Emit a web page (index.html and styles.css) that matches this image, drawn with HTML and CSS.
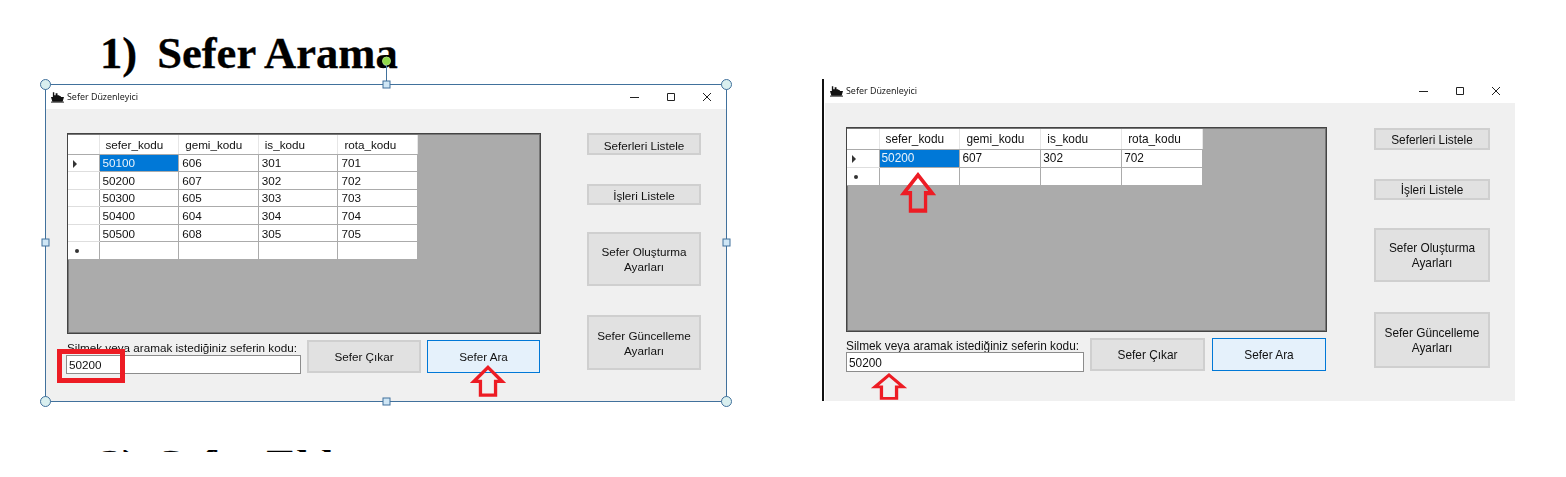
FILE: index.html
```html
<!DOCTYPE html>
<html lang="tr">
<head>
<meta charset="utf-8">
<title>Sefer Arama</title>
<link rel="stylesheet" href="styles.css">
</head>
<body>
<h1 class="heading heading-one"><span>1)</span><span>Sefer Arama</span></h1>
<h1 class="heading heading-two"><span>2)</span><span>Sefer Ekle</span></h1>

<section class="win win-a">
  <header class="titlebar">
    <svg class="ship" viewBox="0 0 14 12"><path d="M2 1h1.500v3H5V2h2v2h2v1h1.500v1H14l-1.500 5h-11L0 6h2z" fill="#111"/><path d="M0 11h14v1H0z" fill="#111"/></svg>
    <span class="title">Sefer Düzenleyici</span>
    <span class="controls">
      <svg viewBox="0 0 10 10"><path d="M0 5.500h9" stroke="#222" fill="none"/></svg>
      <svg viewBox="0 0 10 10"><path d="M1.500 1.500h7v7h-7z" stroke="#222" fill="none"/></svg>
      <svg viewBox="0 0 10 10"><path d="M1 1l8 8M9 1l-8 8" stroke="#222" fill="none"/></svg>
    </span>
  </header>
  <div class="body">
    <div class="main">
      <div class="grid">
        <table>
          <thead><tr><th class="rh"></th><th>sefer_kodu</th><th>gemi_kodu</th><th>is_kodu</th><th>rota_kodu</th></tr></thead>
          <tbody>
            <tr><td class="rh"><i class="tri"></i></td><td class="sel">50100</td><td>606</td><td>301</td><td>701</td></tr>
            <tr><td class="rh"></td><td>50200</td><td>607</td><td>302</td><td>702</td></tr>
            <tr><td class="rh"></td><td>50300</td><td>605</td><td>303</td><td>703</td></tr>
            <tr><td class="rh"></td><td>50400</td><td>604</td><td>304</td><td>704</td></tr>
            <tr><td class="rh"></td><td>50500</td><td>608</td><td>305</td><td>705</td></tr>
            <tr><td class="rh"><i class="dot"></i></td><td></td><td></td><td></td><td></td></tr>
          </tbody>
        </table>
      </div>
      <div class="search">
        <div class="field">
          <label class="label">Silmek veya aramak istediğiniz seferin kodu:</label>
          <div class="input">50200</div>
        </div>
        <button class="btn btn-wide">Sefer Çıkar</button>
        <button class="btn btn-wide btn-active">Sefer Ara</button>
      </div>
    </div>
    <div class="side">
      <button class="btn s1">Seferleri Listele</button>
      <button class="btn s2">İşleri Listele</button>
      <button class="btn s3">Sefer Oluşturma<br>Ayarları</button>
      <button class="btn s4">Sefer Güncelleme<br>Ayarları</button>
    </div>
  </div>
</section>

<section class="win win-b">
  <header class="titlebar">
    <svg class="ship" viewBox="0 0 14 12"><path d="M2 1h1.500v3H5V2h2v2h2v1h1.500v1H14l-1.500 5h-11L0 6h2z" fill="#111"/><path d="M0 11h14v1H0z" fill="#111"/></svg>
    <span class="title">Sefer Düzenleyici</span>
    <span class="controls">
      <svg viewBox="0 0 10 10"><path d="M0 5.500h9" stroke="#222" fill="none"/></svg>
      <svg viewBox="0 0 10 10"><path d="M1.500 1.500h7v7h-7z" stroke="#222" fill="none"/></svg>
      <svg viewBox="0 0 10 10"><path d="M1 1l8 8M9 1l-8 8" stroke="#222" fill="none"/></svg>
    </span>
  </header>
  <div class="body">
    <div class="main">
      <div class="grid">
        <table>
          <thead><tr><th class="rh"></th><th>sefer_kodu</th><th>gemi_kodu</th><th>is_kodu</th><th>rota_kodu</th></tr></thead>
          <tbody>
            <tr><td class="rh"><i class="tri"></i></td><td class="sel">50200</td><td>607</td><td>302</td><td>702</td></tr>
            <tr><td class="rh"><i class="dot"></i></td><td></td><td></td><td></td><td></td></tr>
          </tbody>
        </table>
      </div>
      <div class="search">
        <div class="field">
          <label class="label">Silmek veya aramak istediğiniz seferin kodu:</label>
          <div class="input">50200</div>
        </div>
        <button class="btn btn-wide">Sefer Çıkar</button>
        <button class="btn btn-wide btn-active">Sefer Ara</button>
      </div>
    </div>
    <div class="side">
      <button class="btn s1">Seferleri Listele</button>
      <button class="btn s2">İşleri Listele</button>
      <button class="btn s3">Sefer Oluşturma<br>Ayarları</button>
      <button class="btn s4">Sefer Güncelleme<br>Ayarları</button>
    </div>
  </div>
</section>

<!-- selection frame around the first screenshot -->
<svg class="selection" viewBox="0 0 710 350">
  <path class="sel-line" d="M20.500 30.500h681v317h-681zM361.500 30.500V8"/>
  <circle class="sel-round" cx="20.500" cy="30.500" r="5"/>
  <circle class="sel-round" cx="701.500" cy="30.500" r="5"/>
  <circle class="sel-round" cx="20.500" cy="347.500" r="5"/>
  <circle class="sel-round" cx="701.500" cy="347.500" r="5"/>
  <rect class="sel-square" x="358" y="27" width="7" height="7"/>
  <rect class="sel-square" x="358" y="344" width="7" height="7"/>
  <rect class="sel-square" x="17" y="185" width="7" height="7"/>
  <rect class="sel-square" x="698" y="185" width="7" height="7"/>
  <circle class="sel-rot" cx="361.500" cy="7" r="4"/>
</svg>

<div class="redbox"></div>

<svg class="arrow arrow-1" viewBox="0 0 36 34" preserveAspectRatio="none"><path d="M18 2.500L33 17.500H26V32H10V17.500H3z"/></svg>
<svg class="arrow arrow-2" viewBox="0 0 36 34" preserveAspectRatio="none"><path d="M18 2.500L33 17.500H26V32H10V17.500H3z"/></svg>
<svg class="arrow arrow-3" viewBox="0 0 36 34" preserveAspectRatio="none"><path d="M18 2.500L33 17.500H26V32H10V17.500H3z"/></svg>
</body>
</html>
```

FILE: styles.css
```css
* { box-sizing: border-box; }
html, body { margin: 0; height: 100%; }
body {
  position: relative;
  width: 1566px;
  height: 477px;
  overflow: hidden;
  background: #fff;
  font-family: "Liberation Sans", Arial, sans-serif;
  color: #111;
}

.heading {
  position: absolute;
  left: 100px;
  margin: 0;
  display: flex;
  gap: 20px;
  font-family: "Liberation Serif", "Times New Roman", serif;
  font-weight: 700;
  font-size: 44.600px;
  line-height: 50px;
  color: #000;
  white-space: nowrap;
  overflow: hidden;
  -webkit-text-stroke: 0.3px #000;
}
.heading-one { top: 28px; }
.heading-two { top: 440px; height: 12px; clip-path: inset(10px 0 0 0); }

.win { position: absolute; display: flex; flex-direction: column; background: #fff; filter: blur(0.3px); }
.win-a { left: 46px; top: 85px; width: 680px; height: 317px; font-size: 11.7px; }
.win-b { left: 825px; top: 79px; width: 690px; height: 322px; font-size: 11.85px; }
.win-b::before {
  content: "";
  position: absolute;
  left: -3px; top: 0; bottom: 0;
  width: 2px;
  background: #111;
}

.titlebar { display: flex; align-items: center; flex: none; height: 24px; padding: 0 0 1px 5px; }
.ship { width: 13px; height: 12px; flex: none; }
.title { margin-left: 3px; font-family: "Noto Sans", sans-serif; font-size: 8.900px; color: #222; padding-bottom: 1px; }
.controls { margin: 0 -12px 0 auto; display: flex; }
.controls svg { width: 10px; height: 10px; margin-right: 26px; }

.body { flex: 1; display: flex; background: #f0f0f0; padding: 24px 0 0 21px; }

.main { display: flex; flex-direction: column; flex: none; }
.win-a .main { width: 474px; }
.win-b .main { width: 481px; }

.grid { background: #ababab; border: 1px solid #444; box-shadow: inset 0 0 0 1px #777; padding-top: 1px; }
.win-a .grid { height: 201px; }
.win-b .grid { height: 205px; }

table { border-collapse: collapse; table-layout: fixed; font-size: inherit; }
.win-a table { width: 350px; }
.win-b table { width: 356px; }
th, td { padding: 0; text-align: left; background: #fff; font-weight: 400; white-space: nowrap; overflow: hidden; }
td { border: 1px solid #ababab; color: #111; padding-left: 2px; }
.win-a td { padding-left: 3px; }
th { padding-left: 6px; border-bottom: 1px solid #ababab; border-right: 1px solid #e6e6e6; }
.rh { position: relative; border-left: 0; padding: 0; }
.win-a .rh { width: 31px; }
.win-b .rh { width: 32px; }
.win-a td.rh, .win-b td.rh { padding: 0; }
td.rh { border-top-color: #dedede; border-bottom-color: #dedede; }
tr:last-child td.rh { border-bottom-color: #ababab; }
.win-a th { height: 19px; }
.win-b th { height: 20px; }
.win-a td { height: 17.600px; }
.win-b td { height: 18px; }
td.sel { background: #0078d7; color: #eaf3fb; }
.tri { position: absolute; left: 5px; top: 5px; width: 0; height: 0; border: 4px solid transparent; border-left-color: #333; border-right-width: 0; }
.dot { position: absolute; left: 7px; top: 7px; width: 4px; height: 4px; border-radius: 50%; background: #333; }

.search { display: flex; align-items: flex-start; margin-top: 6px; gap: 6px; }
.field { display: flex; flex-direction: column; }
.win-a .field { width: 235px; margin-left: -1px; }
.win-b .field { width: 238px; }
.label { line-height: 15px; height: 15px; color: #111; white-space: nowrap; }
.win-a .label { margin-left: 1px; }
.win-b .label { height: 14px; line-height: 17px; }
.input {
  height: 19px;
  background: #fff;
  border: 1px solid #8c8c8c;
  padding-left: 2px;
  line-height: 17px;
  color: #111;
}
.win-b .input { height: 20px; line-height: 20px; }

.btn {
  display: block;
  padding: 2px 0 0;
  background: #e1e1e1;
  border: 2px solid #cfcfcf;
  font-family: inherit;
  font-size: inherit;
  line-height: 15px;
  color: #111;
  text-align: center;
}
.btn-wide { height: 33px; flex: none; }
.win-a .btn-wide { width: 114px; padding-top: 0; }
.win-b .btn-wide { width: 115px; }
.btn-active { background: #e5f1fb; border: 1px solid #0078d7; }
.win-a .btn-active { width: 113px; }
.win-b .btn-active { width: 114px; margin-left: 1px; }

.side { display: flex; flex-direction: column; flex: none; }
.win-a .side { width: 114px; margin-left: 46px; }
.win-b .side { width: 116px; margin-left: 47px; margin-top: 1px; }
.s1 { height: 22px; }
.s2 { height: 21px; margin-top: 29px; }
.win-a .s3 { height: 54px; margin-top: 27px; padding-top: 0; }
.win-a .s4 { height: 55px; margin-top: 29px; padding-top: 0; }
.win-b .s3 { height: 54px; margin-top: 28px; }
.win-b .s4 { height: 56px; margin-top: 30px; }

.selection { position: absolute; left: 25px; top: 54px; width: 710px; height: 350px; overflow: visible; }
.sel-line { fill: none; stroke: #41719c; stroke-width: 1; }
.sel-round { fill: #d9efef; stroke: #41719c; }
.sel-square { fill: #cfe6f5; stroke: #41719c; }
.sel-rot { fill: #8fd94a; stroke: #a6d96a; }

.redbox { position: absolute; left: 57px; top: 349px; width: 68px; height: 34px; border: 5px solid #ed1c24; }

.arrow { position: absolute; width: 34px; height: 32px; overflow: visible; }
.arrow path { fill: none; stroke: #ed1c24; stroke-width: 3.500px; }
.arrow-1 { left: 471px; top: 365px; }
.arrow-2 { left: 901px; top: 172px; height: 41px; }
.arrow-3 { left: 872px; top: 373px; height: 27px; }
```
